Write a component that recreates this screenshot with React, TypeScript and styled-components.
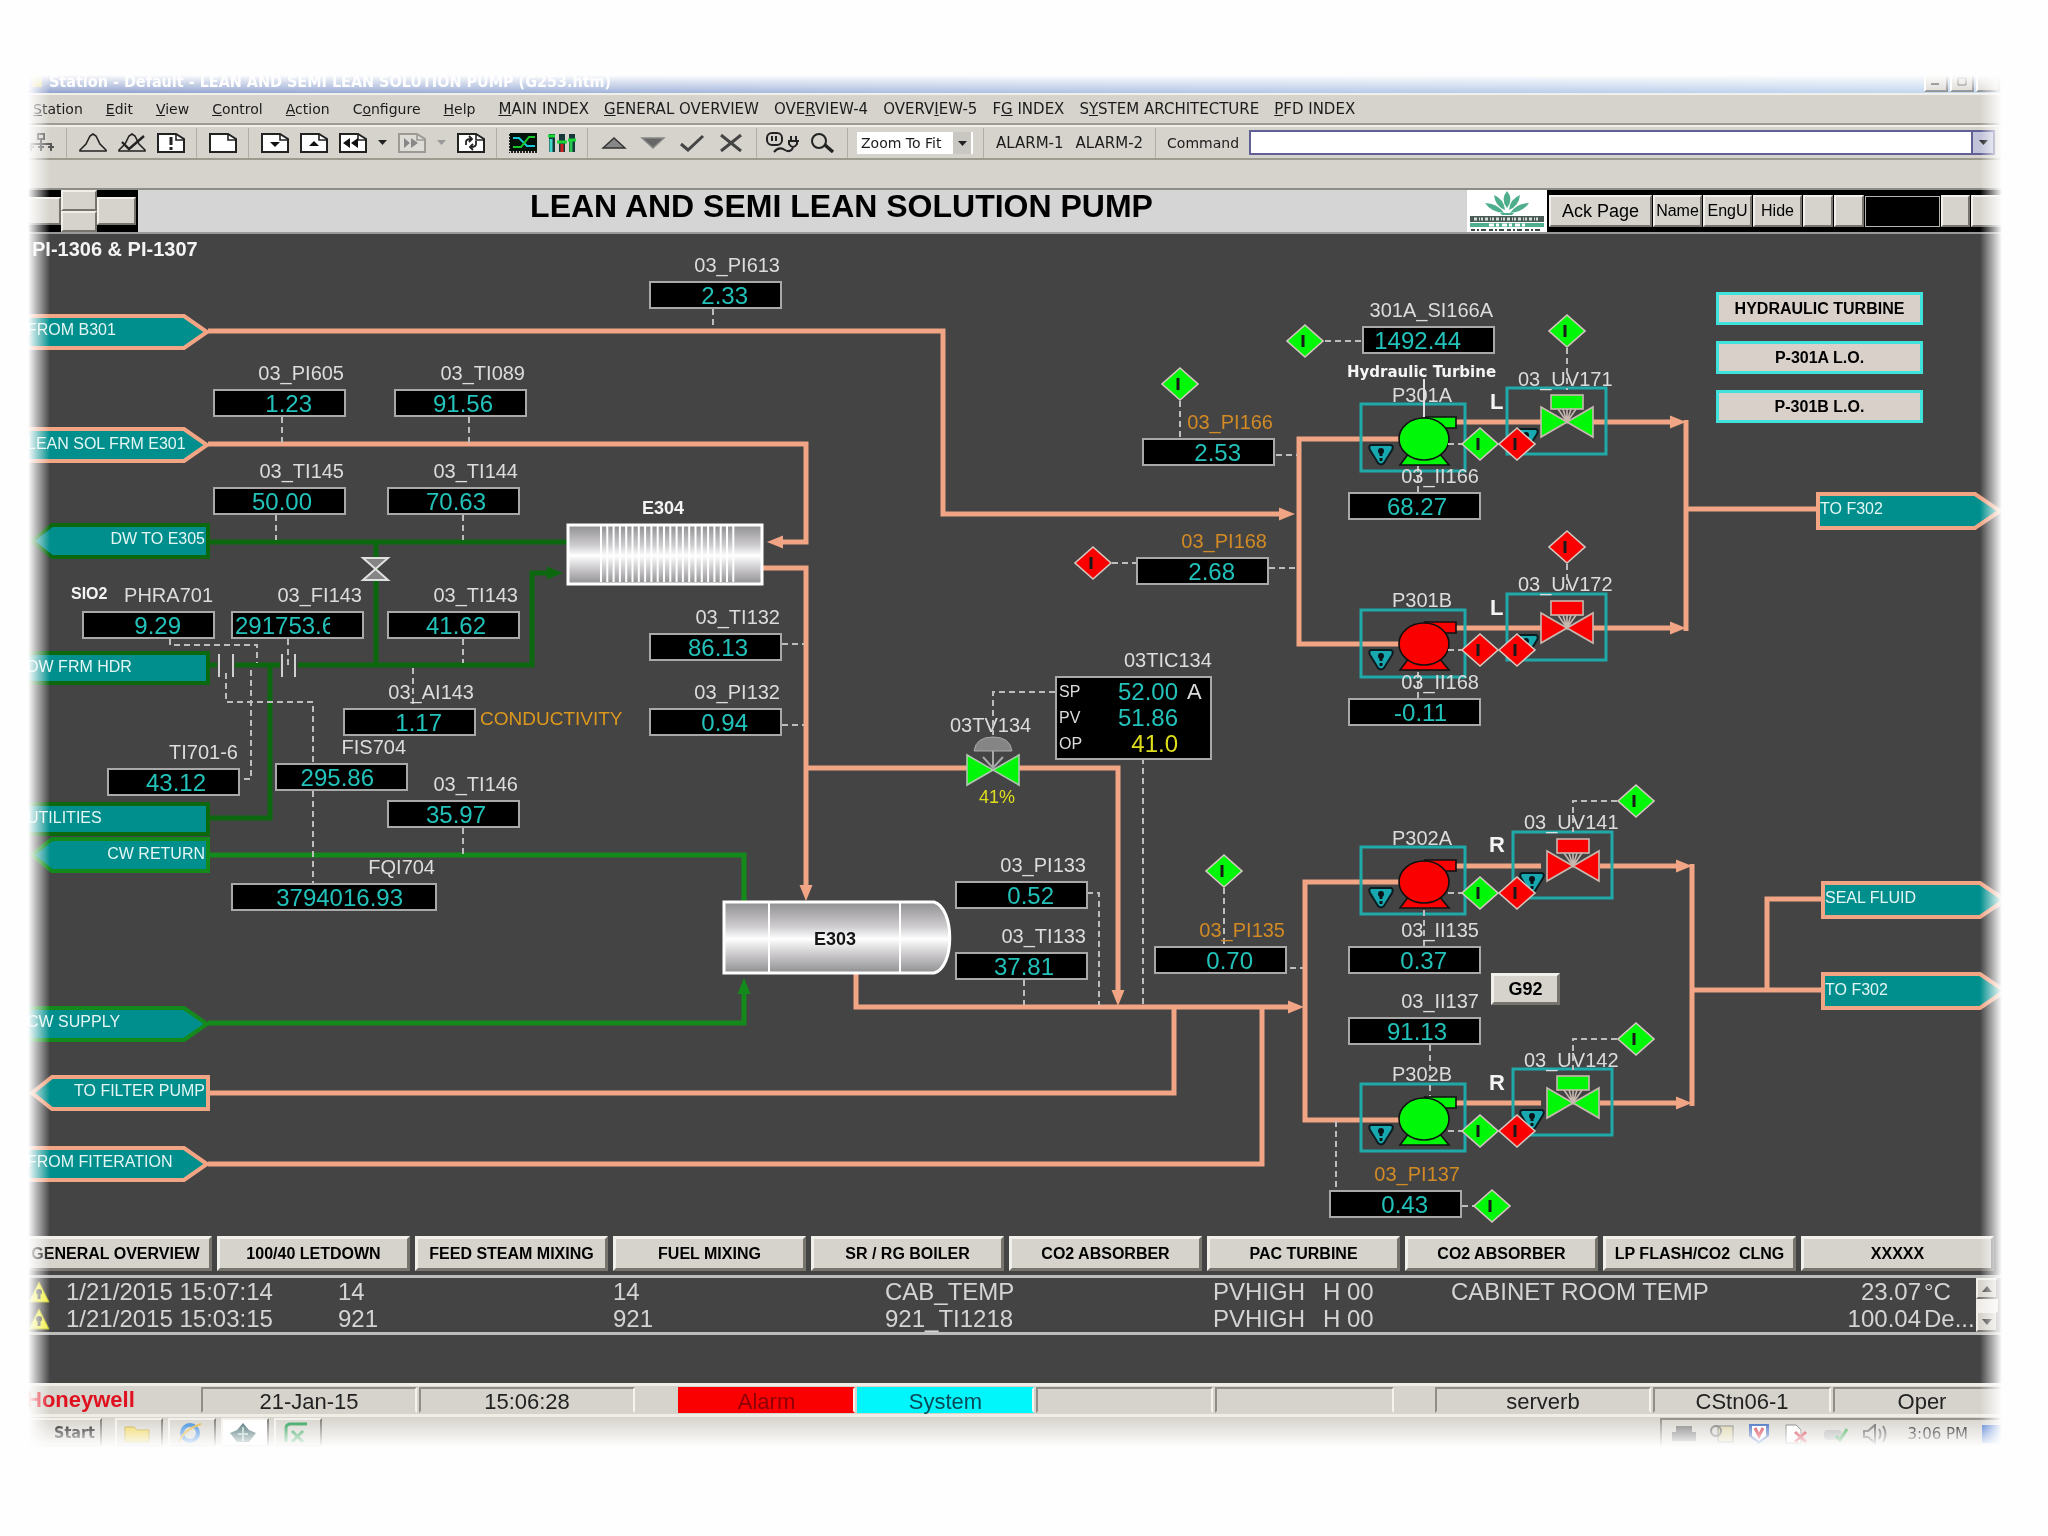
import React from 'react';
import styled, { createGlobalStyle, css } from 'styled-components';

const PEACH = '#f2a584';
const DARK_GREEN = '#0b680f';
const GREEN = '#138a1b';
const TEAL = '#008f8d';
const ON = '#00f808';
const OFF = '#fb0000';
const PANEL = '#d6d3cc';
const SANS = '"Liberation Sans", Arial, sans-serif';
const UI = '"DejaVu Sans", Verdana, sans-serif';

/* Vertical origin of the process drawing's coordinate space. */
const ORIGIN_Y = 234;

const Global = createGlobalStyle`
  * { box-sizing: border-box; }
  body { margin: 0; background: #fefefe; font-family: ${SANS}; }
  button, select, input { font-family: inherit; margin: 0; }
`;

const Page = styled.div`
  padding-top: 70px;
  overflow: hidden;
`;

const Frame = styled.div`
  background: #454445;
  mask-image:
    linear-gradient(to right, transparent 28px, #000 50px, #000 calc(100% - 68px), transparent calc(100% - 46px)),
    linear-gradient(to bottom, transparent 5px, #000 26px, #000 calc(100% - 30px), transparent 100%);
  mask-composite: intersect;
`;

const TitleBar = styled.header`
  display: flex;
  justify-content: space-between;
  align-items: center;
  height: 23px;
  padding: 0 48px 0 32px;
  background: linear-gradient(to right, #7b8fc4, #9fb4dc 45%, #bcd3ee);
  color: #fff;
  font: bold 16px/23px ${UI};
  white-space: nowrap;
`;

const TitleText = styled.span`
  display: flex;
  align-items: center;
  gap: 5px;
  font-family: "DejaVu Sans Condensed", ${UI};
`;

const WindowButtons = styled.div`
  display: flex;
  gap: 2px;
`;

const WindowButton = styled.button`
  width: 24px;
  height: 20px;
  padding: 0;
  border: 2px solid;
  border-color: #fff #777 #777 #fff;
  background: ${PANEL};
`;

const MenuBar = styled.nav`
  display: flex;
  align-items: center;
  height: 32px;
  padding-left: 33px;
  border-top: 2px solid #efeee8;
  border-bottom: 2px solid #9b9b90;
  background: ${PANEL};
`;

const MenuItem = styled.button<{ $page?: boolean }>`
  padding: 0;
  margin-right: ${p => (p.$page ? 15 : 23)}px;
  border: 0;
  background: none;
  color: #1c1c1c;
  font: ${p => (p.$page ? 15 : 14)}px/20px ${UI};
  white-space: nowrap;
`;

const Toolbar = styled.div`
  display: flex;
  align-items: center;
  height: 35px;
  padding: 0 53px 0 21px;
  border-top: 2px solid #efeee8;
  border-bottom: 2px solid #9b9b90;
  background: ${PANEL};
  color: #1c1c1c;
  font: 14px/20px ${UI};
`;

const ToolButton = styled.button<{ $narrow?: boolean }>`
  display: flex;
  justify-content: center;
  align-items: center;
  flex: none;
  width: ${p => (p.$narrow ? 20 : 39)}px;
  height: 26px;
  padding: 0;
  border: 0;
  background: none;
`;

const TextButton = styled.button`
  padding: 0 6px;
  border: 0;
  background: none;
  color: #1c1c1c;
  font: 15px/20px ${UI};
  white-space: nowrap;
`;

const Rule = styled.span`
  flex: none;
  width: 1px;
  height: 30px;
  margin: 0 6px;
  background: #b0aea6;
`;

const ZoomBox = styled.div`
  position: relative;
  flex: none;
  width: 116px;
  margin: 0 4px 0 3px;
`;

const ZoomSelect = styled.select`
  appearance: none;
  width: 100%;
  height: 22px;
  padding: 0 0 0 4px;
  border: 0;
  border-radius: 0;
  background: linear-gradient(to right, #fff 96px, #c9c7c1 96px, #c9c7c1 114px, #fff 114px);
  color: #1c1c1c;
  font: 14px/22px ${UI};
`;

const ZoomCaret = styled.svg`
  position: absolute;
  right: 6px;
  top: 9px;
  pointer-events: none;
`;

const CommandLabel = styled.label`
  padding: 0 10px 0 5px;
`;

const CommandBox = styled.div`
  display: flex;
  flex: 1;
  height: 25px;
  border: 2px solid #605f96;
  background: #fff;
`;

const CommandInput = styled.input`
  flex: 1;
  min-width: 0;
  border: 0;
  padding: 0 4px;
  outline: 0;
  font: 14px/20px ${UI};
`;

const CommandDrop = styled.button`
  display: flex;
  justify-content: center;
  align-items: center;
  width: 22px;
  padding: 0;
  border: 0;
  border-left: 2px solid #605f96;
  background: #c0c3da;
`;

const Spacer = styled.div`
  height: 30px;
  border-bottom: 2px solid #8d8c86;
  background: ${PANEL};
`;

const DisplayHeader = styled.div`
  display: flex;
  height: 44px;
  border-bottom: 2px solid #9a9a98;
  background: #d5d5d6;
`;

const Pager = styled.div`
  display: flex;
  align-items: center;
  width: 138px;
  padding-left: 22px;
  background: #000;
`;

const bevel = css`
  border: 2px solid;
  border-color: #f1efe9 #77746e #77746e #f1efe9;
  background: ${PANEL};
  color: #000;
`;

const PagerButton = styled.button`
  ${bevel}
  width: 39px;
  height: 28px;
  padding: 0;
`;

const PagerStack = styled.div`
  display: flex;
  flex-direction: column;
  width: 36px;
  height: 100%;

  & > button {
    ${bevel}
    flex: 1;
    padding: 0;
  }
`;

const DisplayTitle = styled.h1`
  flex: 1;
  margin: 0;
  padding-left: 78px;
  text-align: center;
  font: bold 32px/32px ${SANS};
  color: #000;
  white-space: nowrap;
`;

const HeaderTools = styled.div`
  display: flex;
  align-items: center;
  gap: 1px;
  width: 501px;
  padding-left: 2px;
  background: #000;
`;

const HeaderButton = styled.button<{ $w: number; $large?: boolean }>`
  ${bevel}
  flex: none;
  width: ${p => p.$w}px;
  height: 32px;
  padding: 0;
  font: ${p => (p.$large ? 18 : 16)}px/26px ${SANS};
`;

const HeaderField = styled.div`
  flex: none;
  width: 75px;
  height: 31px;
  border: 1px solid #b5b5b0;
`;

const Canvas = styled.main`
  position: relative;
  height: 1000px;
  overflow: hidden;
`;

const Drawing = styled.svg`
  display: block;
  width: 2048px;
  height: 1000px;
`;

const Overlay = styled(Drawing)`
  position: absolute;
  inset: 0;
  pointer-events: none;
`;

const at = css<{ $x: number; $y: number }>`
  position: absolute;
  left: ${p => p.$x}px;
  top: ${p => p.$y - ORIGIN_Y}px;
`;

/* A point's tag above its live value; $y is the top of the value box. */
const Point = styled.div<{ $x: number; $y: number; $w: number }>`
  ${at}
  margin-top: -28px;
  display: flex;
  flex-direction: column;
  align-items: flex-end;
  gap: 4px;
  width: ${p => p.$w}px;
`;

const PointTag = styled.span<{ $warn?: boolean }>`
  padding-right: 2px;
  color: ${p => (p.$warn ? '#d18a24' : '#dcdcdc')};
  font: 20px/24px ${SANS};
  white-space: nowrap;
`;

const PointValue = styled.output<{ $clip?: boolean }>`
  display: block;
  width: 100%;
  height: 28px;
  padding: 0 32px 0 2px;
  border: 2px solid #a9a9a9;
  background: #000;
  color: #22c2ba;
  font: 24px/25px ${SANS};
  text-align: ${p => (p.$clip ? 'left' : 'right')};
`;

const ClippedValue = styled.span`
  display: block;
  overflow-x: clip;
`;

const Caption = styled.span<{ $x: number; $y: number; $size?: number; $bold?: boolean; $color?: string }>`
  ${at}
  margin-top: -12px;
  color: ${p => p.$color ?? '#dcdcdc'};
  font: ${p => (p.$bold ? 'bold' : 'normal')} ${p => p.$size ?? 20}px/24px ${SANS};
  white-space: nowrap;
`;

const TurbineCaption = styled(Caption)`
  font: bold 15px/24px ${UI};
`;

const FlowLink = styled.a<{ $x: number; $y: number; $w: number; $end?: boolean }>`
  ${at}
  margin-top: -14px;
  width: ${p => p.$w}px;
  text-align: ${p => (p.$end ? 'right' : 'left')};
  color: #e4f6f4;
  font: 16px/28px ${SANS};
  text-decoration: none;
  white-space: nowrap;
`;

const Faceplate = styled.section`
  ${at}
  display: grid;
  grid-template-columns: 32px 87px 1fr;
  grid-auto-rows: 26px;
  align-items: center;
  width: 157px;
  padding: 1px 0 1px 2px;
  border: 2px solid #a9a9a9;
  background: #000;
  color: #dcdcdc;
  font: 16px/26px ${SANS};
`;

const FaceValue = styled.output<{ $out?: boolean }>`
  color: ${p => (p.$out ? '#dede1c' : '#22c2ba')};
  font-size: 24px;
  text-align: right;
`;

const Mode = styled.span`
  padding-left: 9px;
  font-size: 22px;
`;

const LinkStack = styled.div`
  ${at}
  display: flex;
  flex-direction: column;
  gap: 16px;
  width: 207px;
`;

const StackButton = styled.button`
  height: 33px;
  padding: 0;
  border: 3px solid #3fe3dc;
  background: #d9d0ca;
  color: #000;
  font: bold 16px/24px ${SANS};
`;

const GroupButton = styled.button`
  ${bevel}
  ${at}
  width: 69px;
  height: 32px;
  padding: 0;
  border-width: 3px;
  font: bold 18px/24px ${SANS};
`;

const PageNav = styled.nav`
  display: grid;
  grid-template-columns: repeat(10, 1fr);
  gap: 5px;
  padding: 2px 54px 4px 19px;
`;

const NavButton = styled.button`
  ${bevel}
  height: 35px;
  padding: 0;
  border-width: 3px;
  font: bold 16px/24px ${SANS};
  white-space: pre;
`;

const AlarmPanel = styled.section`
  display: flex;
  padding-right: 50px;
  border-top: 3px solid #bdbdbb;
  border-bottom: 3px solid #bdbdbb;
`;

const AlarmTable = styled.table`
  flex: 1;
  table-layout: fixed;
  width: 100%;
  border-collapse: collapse;
  color: #d4d4d4;
  font: 24px/27px ${SANS};
  white-space: nowrap;

  td { padding: 0; height: 27px; }
  td:first-child { padding-left: 28px; }
  td:first-child svg { display: block; }
`;

const NumberCell = styled.td`
  text-align: right;
`;

const UnitCell = styled.td`
  text-indent: 3px;
`;

const ScrollBar = styled.div`
  display: flex;
  flex-direction: column;
  justify-content: space-between;
  width: 22px;
  background: #efece8;

  & > button {
    ${bevel}
    display: flex;
    justify-content: center;
    align-items: center;
    height: 21px;
    padding: 0;
  }
`;

const Gap = styled.div`
  height: 48px;
`;

const StatusBar = styled.footer`
  display: flex;
  align-items: center;
  height: 34px;
  padding-left: 26px;
  border-top: 3px solid #efede6;
  border-bottom: 3px solid #efede6;
  background: ${PANEL};
  font: 22px/24px ${SANS};
  color: #222;
`;

const Brand = styled.strong`
  width: 175px;
  color: #df1220;
`;

const StatusCell = styled.div<{ $w: number; $gap?: number; $fill?: string; $ink?: string }>`
  flex: none;
  width: ${p => p.$w}px;
  height: 26px;
  margin-right: ${p => p.$gap ?? 2}px;
  border: 2px solid;
  border-color: ${p => p.$fill ?? '#8f8d86'} #f5f3ee ${p => p.$fill ?? '#d6d3cc'} ${p => p.$fill ?? '#8f8d86'};
  background: ${p => p.$fill ?? 'none'};
  color: ${p => p.$ink ?? '#222'};
  line-height: 25px;
  text-align: center;
`;

const TaskBar = styled.div`
  display: flex;
  justify-content: space-between;
  height: 30px;
  padding: 1px 44px 0 24px;
  background: ${PANEL};
`;

const TaskGroup = styled.div`
  display: flex;
  align-items: center;
  gap: 5px;
`;

const TaskButton = styled.button<{ $wide?: boolean; $active?: boolean }>`
  ${bevel}
  display: flex;
  align-items: center;
  justify-content: ${p => (p.$wide ? 'flex-end' : 'center')};
  width: ${p => (p.$wide ? 78 : 48)}px;
  height: 29px;
  padding: 0 5px 0 0;
  margin-right: ${p => (p.$wide ? 8 : 0)}px;
  background: ${p => (p.$active ? '#fff' : PANEL)};
  font: bold 16px/24px "DejaVu Sans Condensed", ${UI};
`;

const Tray = styled.div`
  display: flex;
  align-items: center;
  gap: 14px;
  padding-left: 10px;
  border-top: 2px solid #8f8d86;
  border-left: 2px solid #8f8d86;
  font: 15px/24px ${UI};
`;

const MENU: [string, number, boolean?][] = [
  ['Station', 0], ['Edit', 0], ['View', 0], ['Control', 0], ['Action', 0], ['Configure', 1], ['Help', 0],
  ['MAIN INDEX', 0, true], ['GENERAL OVERVIEW', 0, true], ['OVERVIEW-4', 3, true], ['OVERVIEW-5', 5, true],
  ['FG INDEX', 1, true], ['SYSTEM ARCHITECTURE', 1, true], ['PFD INDEX', 0, true],
];

type PointDef = { tag: string; value: string; x: number; y: number; w?: number; warn?: boolean; clip?: boolean };
const POINTS: PointDef[] = [
  { tag: '03_PI613', value: '2.33', x: 649, y: 281 },
  { tag: '03_PI605', value: '1.23', x: 213, y: 389 },
  { tag: '03_TI089', value: '91.56', x: 394, y: 389 },
  { tag: '03_TI145', value: '50.00', x: 213, y: 487 },
  { tag: '03_TI144', value: '70.63', x: 387, y: 487 },
  { tag: 'PHRA701', value: '9.29', x: 82, y: 611 },
  { tag: '03_FI143', value: '291753.6', x: 231, y: 611, clip: true },
  { tag: '03_TI143', value: '41.62', x: 387, y: 611 },
  { tag: '03_AI143', value: '1.17', x: 343, y: 708 },
  { tag: '03_TI132', value: '86.13', x: 649, y: 633 },
  { tag: '03_PI132', value: '0.94', x: 649, y: 708 },
  { tag: 'TI701-6', value: '43.12', x: 107, y: 768 },
  { tag: 'FIS704', value: '295.86', x: 275, y: 763 },
  { tag: '03_TI146', value: '35.97', x: 387, y: 800 },
  { tag: 'FQI704', value: '3794016.93', x: 231, y: 883, w: 206 },
  { tag: '03_PI133', value: '0.52', x: 955, y: 881 },
  { tag: '03_TI133', value: '37.81', x: 955, y: 952 },
  { tag: '03_PI135', value: '0.70', x: 1154, y: 946, warn: true },
  { tag: '03_PI166', value: '2.53', x: 1142, y: 438, warn: true },
  { tag: '03_PI168', value: '2.68', x: 1136, y: 557, warn: true },
  { tag: '301A_SI166A', value: '1492.44', x: 1362, y: 326 },
  { tag: '03_II166', value: '68.27', x: 1348, y: 492 },
  { tag: '03_II168', value: '-0.11', x: 1348, y: 698 },
  { tag: '03_II135', value: '0.37', x: 1348, y: 946 },
  { tag: '03_II137', value: '91.13', x: 1348, y: 1017 },
  { tag: '03_PI137', value: '0.43', x: 1329, y: 1190, warn: true },
];

type Flow = { text: string; y: number; ty: number; shape: 'right' | 'left' | 'rect'; color: string };
const LEFT_FLOWS: Flow[] = [
  { text: 'FROM B301', y: 332, ty: 330, shape: 'right', color: PEACH },
  { text: 'LEAN SOL FRM E301', y: 445, ty: 444, shape: 'right', color: PEACH },
  { text: 'DW TO E305', y: 541, ty: 539, shape: 'left', color: DARK_GREEN },
  { text: 'DW FRM HDR', y: 668, ty: 667, shape: 'rect', color: DARK_GREEN },
  { text: 'UTILITIES', y: 819, ty: 818, shape: 'rect', color: DARK_GREEN },
  { text: 'CW RETURN', y: 855, ty: 854, shape: 'left', color: GREEN },
  { text: 'CW SUPPLY', y: 1024, ty: 1022, shape: 'right', color: GREEN },
  { text: 'TO FILTER PUMP', y: 1093, ty: 1091, shape: 'left', color: PEACH },
  { text: 'FROM FITERATION', y: 1164, ty: 1162, shape: 'right', color: PEACH },
];
const RIGHT_FLOWS = [
  { text: 'TO F302', x: 1818, y: 511, ty: 509 },
  { text: 'SEAL FLUID', x: 1823, y: 900, ty: 898 },
  { text: 'TO F302', x: 1823, y: 991, ty: 990 },
];

const PIPES: [string, string][] = [
  [PEACH, 'M208 331H943V514H1280'],
  [PEACH, 'M208 444H806V542H783'],
  [PEACH, 'M763 568H806V886'],
  [PEACH, 'M806 768H968M1019 768H1118V994'],
  [PEACH, 'M856 973V1007H1291'],
  [PEACH, 'M208 1093H1174V1007M208 1164H1262V1007'],
  [PEACH, 'M1400 439H1299V644H1400M1400 882H1305V1120H1400'],
  [PEACH, 'M1455 422H1541M1593 422H1672M1455 628H1541M1593 628H1672M1686 420V631M1686 509H1817'],
  [PEACH, 'M1455 866H1541M1600 866H1678M1455 1103H1541M1600 1103H1678M1692 864V1106M1692 990H1822M1767 990V899H1822'],
  [DARK_GREEN, 'M208 542H567M376 542V665M208 665H217M235 665H280M298 665H532V573H548M270 665V818H208'],
  [GREEN, 'M208 855H744V902M208 1023H744V992'],
];

/* Arrow heads: tip position, direction, colour. */
const HEADS: [number, number, 'r' | 'l' | 'u' | 'd', string][] = [
  [1295, 514, 'r', PEACH], [767, 542, 'l', PEACH], [806, 901, 'd', PEACH], [1118, 1006, 'd', PEACH],
  [1304, 1007, 'r', PEACH], [1686, 422, 'r', PEACH], [1686, 628, 'r', PEACH], [1692, 866, 'r', PEACH],
  [1692, 1103, 'r', PEACH], [563, 573, 'r', DARK_GREEN], [744, 978, 'u', GREEN],
];

const SIGNALS = [
  'M713 309V329M282 417V443M469 417V443M276 515V540M463 515V540',
  'M170 639V645H257V663M288 639V665M463 639V663M413 668V708',
  'M251 670V779H240M226 673V702H313V763M313 791V883M463 828V854',
  'M782 644H804M782 725H804M1055 692H993V735M1143 758V1005M1087 893H1099V1005M1024 980V1005',
  'M1224 888V946M1290 968H1303M1180 401V438M1276 455H1297M1269 568H1297M1112 563H1136M1325 341H1362',
  'M1567 348V390M1567 564V594M1617 801H1573V832M1617 1039H1573V1070M1462 1206H1474M1336 1121V1190',
  'M1418 466V492M1418 672V698M1424 910V946M1430 1045V1096M1448 444H1462M1448 650H1462M1448 893H1462M1448 1131H1462',
];

const DIAMONDS: [number, number, string][] = [
  [1180, 384, ON], [1093, 563, OFF], [1305, 341, ON], [1567, 331, ON], [1567, 547, OFF],
  [1636, 801, ON], [1636, 1039, ON], [1224, 871, ON], [1492, 1206, ON],
  [1480, 444, ON], [1517, 444, OFF], [1480, 650, OFF], [1517, 650, OFF],
  [1480, 893, ON], [1517, 893, OFF], [1480, 1131, ON], [1517, 1131, OFF],
];

const PUMPS: [number, string][] = [[439, ON], [644, OFF], [882, OFF], [1119, ON]];
const VALVES: [number, number, string][] = [[1567, 422, ON], [1567, 628, OFF], [1573, 866, OFF], [1573, 1103, ON]];

const ALARMS = [
  ['1/21/2015 15:07:14', '14', '14', 'CAB_TEMP', 'PVHIGH', 'H 00', 'CABINET ROOM TEMP', '23.07', '°C'],
  ['1/21/2015 15:03:15', '921', '921', '921_TI1218', 'PVHIGH', 'H 00', '', '100.04', 'De...'],
];

const PAGES = ['GENERAL OVERVIEW', '100/40 LETDOWN', 'FEED STEAM MIXING', 'FUEL MIXING', 'SR / RG BOILER',
  'CO2 ABSORBER', 'PAC TURBINE', 'CO2 ABSORBER', 'LP FLASH/CO2  CLNG', 'XXXXX'];

const sheet = (extra?: React.ReactNode, ink = '#222', fill = '#fff') => (
  <svg width="28" height="20" viewBox="0 0 28 20" fill="none" stroke={ink} strokeWidth="2">
    <path d="M1 1H19L27 6V19H1Z" fill={fill} />
    <path d="M19 1V7H27" strokeWidth="1.6" />
    {extra}
  </svg>
);

const bellShape = <path d="M14 1L11 3L7 11L1 17V18H27V17L21 11L17 3Z" />;

const ICONS: Record<string, React.ReactNode> = {
  tree: (
    <svg width="28" height="20" viewBox="0 0 28 20" fill="none" stroke="#555" strokeWidth="2">
      <path d="M11 1H17V6H11ZM14 6V11M4 18V11H24V18M14 11V18M1 14H7M11 14H17M21 14H27" />
    </svg>
  ),
  bell: (
    <svg width="28" height="20" viewBox="0 0 28 20" fill="none" stroke="#222" strokeWidth="1.6">
      {bellShape}
    </svg>
  ),
  bellOff: (
    <svg width="28" height="20" viewBox="0 0 28 20" fill="none" stroke="#222" strokeWidth="1.6">
      {bellShape}
      <path d="M4 9L11 16L26 3" strokeWidth="2.4" />
    </svg>
  ),
  notice: sheet(<path d="M14 4V12M14 14V17" strokeWidth="3" />),
  sheet: sheet(),
  down: sheet(<path d="M9 9H19L14 14Z" fill="#111" stroke="none" />),
  up: sheet(<path d="M9 13H19L14 8Z" fill="#111" stroke="none" />),
  back: sheet(<path d="M11 5V15L4 10ZM19 5V15L12 10Z" fill="#111" stroke="none" />),
  fwd: sheet(<path d="M6 5V15L12 10ZM13 5V15L20 10Z" fill="#888" stroke="none" />, '#9c9a94', '#dedcd6'),
  reload: sheet(<path d="M9 12V9Q9 6 14 6M12 3L15 6L12 9M19 8V11Q19 14 14 14M16 11L13 14L16 17" strokeWidth="1.8" />),
  caret: <svg width="9" height="6"><path d="M0 0H9L4.500 5Z" fill="#222" /></svg>,
  caretOff: <svg width="9" height="6"><path d="M0 0H9L4.500 5Z" fill="#999" /></svg>,
  trend: (
    <svg width="28" height="20" viewBox="0 0 28 20" fill="none">
      <rect x="1" width="27" height="18" fill="#05120a" />
      <path d="M4 5H10L18 13H26" stroke="#18c8d8" strokeWidth="2" />
      <path d="M4 14H12L20 4H26" stroke="#18c828" strokeWidth="2" />
      <path d="M0 1V20M2 19H28" stroke="#222" strokeWidth="2" strokeDasharray="2 1" />
    </svg>
  ),
  bars: (
    <svg width="28" height="20" viewBox="0 0 28 20">
      <path d="M4 1V19M14 1V19M24 1V19" stroke="#173838" strokeWidth="6" />
      <path d="M3 6V19" stroke="#3fd8c8" strokeWidth="3" />
      <path d="M14 11V19" stroke="#d02020" strokeWidth="3" />
      <path d="M23 8V19" stroke="#28c850" strokeWidth="3" />
      <path d="M0 3H7M9 9H19M20 7H28" stroke="#18d838" strokeWidth="3" />
    </svg>
  ),
  raise: <svg width="26" height="14"><path d="M2 12L13 2L24 12Z" fill="#888" stroke="#333" strokeWidth="1.4" /></svg>,
  lower: <svg width="26" height="14"><path d="M2 2L13 12L24 2Z" fill="#666" stroke="#888" strokeWidth="1.4" /></svg>,
  tick: <svg width="26" height="18" fill="none" stroke="#444" strokeWidth="3"><path d="M2 10L9 16L24 2" /></svg>,
  cross: <svg width="24" height="18" fill="none" stroke="#444" strokeWidth="3"><path d="M2 1L22 17M22 1L2 17" /></svg>,
  plug: (
    <svg width="34" height="22" viewBox="0 0 34 22" fill="none" stroke="#222" strokeWidth="2">
      <rect x="1" y="1" width="15" height="12" rx="5" />
      <path d="M6 4V9M10 4V9M22 9H33M23 9V12Q27 18 31 12V9M25 4V9M30 4V9M27 16Q24 21 19 18Q13 14 8 20" />
    </svg>
  ),
  lens: (
    <svg width="26" height="20" viewBox="0 0 26 20" fill="none" stroke="#222" strokeWidth="2">
      <circle cx="10" cy="8" r="7" />
      <path d="M16 12L24 19" strokeWidth="3.4" />
    </svg>
  ),
};

const Tool = ({ icon, label, narrow }: { icon: string; label: string; narrow?: boolean }) => (
  <ToolButton $narrow={narrow} aria-label={label}>{ICONS[icon]}</ToolButton>
);

const Diamond = ({ x, y, fill }: { x: number; y: number; fill: string }) => (
  <g transform={`translate(${x} ${y})`}>
    <path d="M0 -16L18 0L0 16L-18 0Z" fill={fill} stroke="#d6c8c0" strokeWidth="1.600" />
    <path d="M-2 -6V6" stroke="#1a1a1a" strokeWidth="3" />
  </g>
);

const Caution = ({ x, y }: { x: number; y: number }) => (
  <g transform={`translate(${x} ${y})`}>
    <path d="M-10 0H10Q13 1 11 5L3 18Q0 21 -3 18L-11 5Q-13 1 -10 0Z" fill="#18a8b0" stroke="#0a1c20" strokeWidth="2" />
    <circle cy="6" r="3" fill="#0a1418" />
    <path d="M0 6V11M0 13V16" stroke="#0a1418" strokeWidth="3" />
  </g>
);

const Pump = ({ y, fill }: { y: number; fill: string }) => (
  <g transform={`translate(1424 ${y})`} fill={fill} stroke="#101010" strokeWidth="1.600">
    <path d="M-15 14L-24 26H25L15 14Z" />
    <path d="M0 -22H32V-11H20Z" />
    <ellipse rx="25" ry="21" />
  </g>
);

const Valve = ({ x, y, fill }: { x: number; y: number; fill: string }) => (
  <g transform={`translate(${x} ${y})`} stroke="#c8b8b0" strokeWidth="1.600">
    <path d="M-9 -13L0 0L9 -13M-4 -13L0 0L4 -13M0 -13V0" fill="none" />
    <rect x="-16" y="-27" width="32" height="14" fill={fill} />
    <path d="M-26 -15L26 15V-15L-26 15Z" fill={fill} />
  </g>
);

const Head = ({ x, y, dir, fill }: { x: number; y: number; dir: string; fill: string }) => {
  const turn: Record<string, number> = { r: 0, d: 90, l: 180, u: 270 };
  return <path d="M0 0L-16 -6.500V6.500Z" fill={fill} transform={`translate(${x} ${y}) rotate(${turn[dir]})`} />;
};

const flowPath = (shape: Flow['shape'], y: number) =>
  shape === 'right' ? `M10 ${y - 16}H184L207 ${y}L184 ${y + 16}H10Z`
    : shape === 'left' ? `M208 ${y - 16}H52L32 ${y}L52 ${y + 16}H208Z`
      : `M10 ${y - 15}H208V${y + 15}H10Z`;

const stripes = Array.from({ length: 22 }, (_, i) => `M${601 + i * 6.3} 526V582`).join('');

const ProcessDrawing = () => (
  <Drawing viewBox={`0 ${ORIGIN_Y} 2048 1000`} aria-hidden="true">
    <defs>
      <linearGradient id="steel" x2="0" y2="1">
        <stop offset="0" stopColor="#8f8e90" />
        <stop offset="0.350" stopColor="#cfcdd0" />
        <stop offset="0.520" stopColor="#fff" />
        <stop offset="0.700" stopColor="#d4d2d4" />
        <stop offset="1" stopColor="#8f8e90" />
      </linearGradient>
    </defs>
    {PIPES.map(([color, d]) => <path key={d} d={d} fill="none" stroke={color} strokeWidth="5" />)}
    {HEADS.map(([x, y, dir, fill]) => <Head key={`${x}-${y}`} x={x} y={y} dir={dir} fill={fill} />)}
    {LEFT_FLOWS.map(f => <path key={f.text} d={flowPath(f.shape, f.y)} fill={TEAL} stroke={f.color} strokeWidth="4" />)}
    {RIGHT_FLOWS.map(f => (
      <path key={f.y} d={`M${f.x} ${f.y - 17}H${f.x + 157}L${f.x + 182} ${f.y}L${f.x + 157} ${f.y + 17}H${f.x}Z`}
        fill={TEAL} stroke={PEACH} strokeWidth="4" />
    ))}
    <path d="M219 654V677M233 654V677M282 654V677M295 654V677" stroke="#d0d0d0" strokeWidth="2" />
    <path d="M363 558H388L363 580H388Z" fill="#858585" stroke="#e0e0e0" strokeWidth="2" />

    <rect x="568" y="525" width="194" height="59" fill="url(#steel)" stroke="#fff" strokeWidth="3" />
    <path d={stripes} stroke="#fff" strokeWidth="2" />
    <path d="M724 902H934C955 908 955 968 934 973H724Z" fill="url(#steel)" stroke="#fff" strokeWidth="3" />
    <path d="M769 902V973M900 902V973" stroke="#fff" strokeWidth="2" />

    {[404, 610, 847, 1084].map(y => (
      <rect key={y} x="1361" y={y} width="104" height="67" fill="none" stroke="#1fa9a9" strokeWidth="3" />
    ))}
    {VALVES.map(([x, y]) => (
      <rect key={`${x}-${y}`} x={x - 60} y={y - 34} width="99" height="66" fill="none" stroke="#1fa9a9" strokeWidth="3" />
    ))}
    {PUMPS.map(([y, fill]) => <Pump key={y} y={y} fill={fill} />)}
    {PUMPS.map(([y]) => <Caution key={y} x={1381} y={y + 6} />)}
    {VALVES.map(([x, y, fill]) => <Valve key={`${x}-${y}`} x={x} y={y} fill={fill} />)}
    {VALVES.map(([x, y]) => <Caution key={`${x}-${y}`} x={x - 41} y={y + 7} />)}

    <path d="M974 751Q976 737 993 737Q1010 737 1012 751Z" fill="#858585" stroke="#a8a8a8" />
    <path d="M967 755L1019 785V755L967 785Z" fill={ON} stroke="#b0c8b0" strokeWidth="1.600" />
    <path d="M993 751V768M983 757L993 768L1003 757" fill="none" stroke="#a8a8a8" strokeWidth="2" />
  </Drawing>
);

const SignalOverlay = () => (
  <Overlay viewBox={`0 ${ORIGIN_Y} 2048 1000`} aria-hidden="true">
    {SIGNALS.map(d => (
      <path key={d} d={d} fill="none" stroke="#bdbdbd" strokeWidth="2" strokeDasharray="6 4" />
    ))}
    <path d="M1424 379V417" stroke="#e0e0e0" strokeWidth="2" />
    {DIAMONDS.map(([x, y, fill]) => <Diamond key={`${x}-${y}`} x={x} y={y} fill={fill} />)}
  </Overlay>
);

const Logo = () => (
  <svg width="80" height="42" viewBox="0 0 80 42" aria-label="Company logo">
    <rect width="80" height="42" fill="#fff" />
    <g fill="#4fae8c">
      <path d="M40 1Q47 9 40 18Q33 9 40 1Z" />
      <path d="M27 5Q37 9 38 20Q28 16 27 5ZM53 5Q43 9 42 20Q52 16 53 5Z" />
      <path d="M18 13Q30 13 37 23Q24 22 18 13ZM62 13Q50 13 43 23Q56 22 62 13Z" />
      <path d="M33 23H47L45 25H35Z" />
      <rect x="3" y="33" width="74" height="4" />
    </g>
    <rect x="3" y="26" width="74" height="6" fill="#4a5a56" />
    <path d="M7 29H73" stroke="#d4dcd8" strokeWidth="3" strokeDasharray="3 2 1 1 2 2" />
    <path d="M22 35H58" stroke="#fff" strokeWidth="3" strokeDasharray="5 2 3 3" />
    <path d="M4 40H76" stroke="#3a4a44" strokeWidth="2" strokeDasharray="4 2 2 2 5 3" />
  </svg>
);

const AlarmIcon = () => (
  <svg width="22" height="22" viewBox="0 0 22 22">
    <path d="M11 1L21 21H1Z" fill="#f2f03c" stroke="#b8b428" />
    <circle cx="11" cy="11" r="3" fill="#555" />
    <path d="M11 14V18" stroke="#555" strokeWidth="3" />
  </svg>
);

const Arrow = ({ up }: { up?: boolean }) => (
  <svg width="12" height="8"><path d={up ? 'M1 7H11L6 1Z' : 'M1 1H11L6 7Z'} fill="#444" /></svg>
);

export default function App() {
  return (
    <Page>
      <Global />
      <Frame>
        <TitleBar>
          <TitleText>
            <svg width="12" height="14"><path d="M0 0H10V12H0Z" fill="#d8c860" /></svg>
            Station - Default - LEAN AND SEMI LEAN SOLUTION PUMP (G253.htm)
          </TitleText>
          <WindowButtons>
            <WindowButton aria-label="Minimize"><svg width="12" height="10"><path d="M1 8H9" stroke="#222" strokeWidth="2" /></svg></WindowButton>
            <WindowButton aria-label="Restore"><svg width="12" height="10"><path d="M2 2H10V9H2Z" fill="none" stroke="#222" /></svg></WindowButton>
            <WindowButton aria-label="Close" />
          </WindowButtons>
        </TitleBar>

        <MenuBar>
          {MENU.map(([text, key, page]) => (
            <MenuItem key={text} $page={page}>
              {text.slice(0, key)}<u>{text[key]}</u>{text.slice(key + 1)}
            </MenuItem>
          ))}
        </MenuBar>

        <Toolbar>
          <Tool icon="tree" label="Station tree" />
          <Rule />
          <Tool icon="bell" label="Alarm summary" />
          <Tool icon="bellOff" label="Acknowledge" />
          <Tool icon="notice" label="Messages" />
          <Rule />
          <Tool icon="sheet" label="Call page" />
          <Rule />
          <Tool icon="down" label="Page down" />
          <Tool icon="up" label="Page up" />
          <Tool icon="back" label="Previous page" />
          <Tool icon="caret" label="Previous pages" narrow />
          <Tool icon="fwd" label="Next page" />
          <Tool icon="caretOff" label="Next pages" narrow />
          <Tool icon="reload" label="Reload page" />
          <Rule />
          <Tool icon="trend" label="Trend" />
          <Tool icon="bars" label="Group" />
          <Rule />
          <Tool icon="raise" label="Raise" />
          <Tool icon="lower" label="Lower" />
          <Tool icon="tick" label="Accept" />
          <Tool icon="cross" label="Cancel" />
          <Rule />
          <Tool icon="plug" label="Connect" />
          <Tool icon="lens" label="Search" />
          <Rule />
          <ZoomBox>
            <ZoomSelect aria-label="Zoom" defaultValue="fit">
              <option value="fit">Zoom To Fit</option>
              <option value="100">100%</option>
            </ZoomSelect>
            <ZoomCaret width="9" height="6"><path d="M0 0H9L4.500 5Z" fill="#222" /></ZoomCaret>
          </ZoomBox>
          <Rule />
          <TextButton>ALARM-1</TextButton>
          <TextButton>ALARM-2</TextButton>
          <Rule />
          <CommandLabel htmlFor="command">Command</CommandLabel>
          <CommandBox>
            <CommandInput id="command" />
            <CommandDrop aria-label="Command history">{ICONS.caret}</CommandDrop>
          </CommandBox>
        </Toolbar>
        <Spacer />

        <DisplayHeader>
          <Pager>
            <PagerButton aria-label="Previous display" />
            <PagerStack>
              <button aria-label="Display above" />
              <button aria-label="Display below" />
            </PagerStack>
            <PagerButton aria-label="Next display" />
          </Pager>
          <DisplayTitle>LEAN AND SEMI LEAN SOLUTION PUMP</DisplayTitle>
          <Logo />
          <HeaderTools>
            <HeaderButton $w={103} $large>Ack Page</HeaderButton>
            <HeaderButton $w={49}>Name</HeaderButton>
            <HeaderButton $w={49}>EngU</HeaderButton>
            <HeaderButton $w={49}>Hide</HeaderButton>
            <HeaderButton $w={30} aria-label="Option 1" />
            <HeaderButton $w={30} aria-label="Option 2" />
            <HeaderField />
            <HeaderButton $w={29} aria-label="Option 3" />
            <HeaderButton $w={49} aria-label="Option 4" />
          </HeaderTools>
        </DisplayHeader>

        <Canvas>
          <ProcessDrawing />
          {LEFT_FLOWS.map(f => (
            <FlowLink key={f.text} href="#" $x={27} $y={f.ty} $w={178} $end={f.shape === 'left'}>{f.text}</FlowLink>
          ))}
          {RIGHT_FLOWS.map(f => (
            <FlowLink key={f.y} href="#" $x={f.x + 2} $y={f.ty} $w={150}>{f.text}</FlowLink>
          ))}

          <Caption $x={32} $y={249} $bold $color="#f4f4f4">PI-1306 &amp; PI-1307</Caption>
          <Caption $x={642} $y={508} $size={18} $bold $color="#f4f4f4">E304</Caption>
          <Caption $x={814} $y={939} $size={18} $bold $color="#141414">E303</Caption>
          <Caption $x={71} $y={594} $size={16} $bold $color="#f4f4f4">SIO2</Caption>
          <Caption $x={480} $y={719} $size={19} $color="#dc981c">CONDUCTIVITY</Caption>
          <Caption $x={950} $y={725}>03TV134</Caption>
          <Caption $x={979} $y={797} $size={18} $color="#dede1c">41%</Caption>
          <Caption $x={1124} $y={660}>03TIC134</Caption>
          <TurbineCaption $x={1347} $y={372} $color="#f4f4f4">Hydraulic Turbine</TurbineCaption>
          <Caption $x={1392} $y={395}>P301A</Caption>
          <Caption $x={1392} $y={600}>P301B</Caption>
          <Caption $x={1392} $y={838}>P302A</Caption>
          <Caption $x={1392} $y={1074}>P302B</Caption>
          <Caption $x={1518} $y={379}>03_UV171</Caption>
          <Caption $x={1518} $y={584}>03_UV172</Caption>
          <Caption $x={1524} $y={822}>03_UV141</Caption>
          <Caption $x={1524} $y={1060}>03_UV142</Caption>
          <Caption $x={1490} $y={402} $size={22} $bold $color="#f4f4f4">L</Caption>
          <Caption $x={1490} $y={608} $size={22} $bold $color="#f4f4f4">L</Caption>
          <Caption $x={1489} $y={845} $size={22} $bold $color="#f4f4f4">R</Caption>
          <Caption $x={1489} $y={1083} $size={22} $bold $color="#f4f4f4">R</Caption>

          <SignalOverlay />

          {POINTS.map(p => (
            <Point key={p.tag} $x={p.x} $y={p.y} $w={p.w ?? 133}>
              <PointTag $warn={p.warn}>{p.tag}</PointTag>
              <PointValue $clip={p.clip}>
                {p.clip ? <ClippedValue>{p.value}</ClippedValue> : p.value}
              </PointValue>
            </Point>
          ))}

          <Faceplate $x={1055} $y={676}>
            <span>SP</span><FaceValue>52.00</FaceValue><Mode>A</Mode>
            <span>PV</span><FaceValue>51.86</FaceValue><span />
            <span>OP</span><FaceValue $out>41.0</FaceValue><span />
          </Faceplate>

          <LinkStack $x={1716} $y={292}>
            <StackButton>HYDRAULIC TURBINE</StackButton>
            <StackButton>P-301A L.O.</StackButton>
            <StackButton>P-301B L.O.</StackButton>
          </LinkStack>
          <GroupButton $x={1491} $y={973}>G92</GroupButton>
        </Canvas>

        <PageNav>
          {PAGES.map((p, i) => <NavButton key={i}>{p}</NavButton>)}
        </PageNav>

        <AlarmPanel>
          <AlarmTable>
            <colgroup>
              <col style={{ width: 66 }} />
              <col style={{ width: 272 }} />
              <col style={{ width: 275 }} />
              <col style={{ width: 272 }} />
              <col style={{ width: 328 }} />
              <col style={{ width: 110 }} />
              <col style={{ width: 128 }} />
              <col />
              <col style={{ width: 100 }} />
              <col style={{ width: 55 }} />
            </colgroup>
            <tbody>
              {ALARMS.map(a => (
                <tr key={a[0]}>
                  <td><AlarmIcon /></td>
                  {a.slice(0, 7).map((cell, i) => <td key={i}>{cell}</td>)}
                  <NumberCell>{a[7]}</NumberCell>
                  <UnitCell>{a[8]}</UnitCell>
                </tr>
              ))}
            </tbody>
          </AlarmTable>
          <ScrollBar>
            <button aria-label="Scroll up"><Arrow up /></button>
            <button aria-label="Scroll down"><Arrow /></button>
          </ScrollBar>
        </AlarmPanel>
        <Gap />

        <StatusBar>
          <Brand>Honeywell</Brand>
          <StatusCell $w={216}>21-Jan-15</StatusCell>
          <StatusCell $w={216} $gap={43}>15:06:28</StatusCell>
          <StatusCell $w={177} $fill="#fa0000" $ink="#8c0008">Alarm</StatusCell>
          <StatusCell $w={177} $fill="#00f6fa" $ink="#0a4a58">System</StatusCell>
          <StatusCell $w={177} />
          <StatusCell $w={179} $gap={41} />
          <StatusCell $w={216}>serverb</StatusCell>
          <StatusCell $w={178}>CStn06-1</StatusCell>
          <StatusCell $w={178}>Oper</StatusCell>
        </StatusBar>

        <TaskBar>
          <TaskGroup>
            <TaskButton $wide>Start</TaskButton>
            <TaskButton aria-label="Folders"><svg width="26" height="20"><path d="M1 4H10L13 7H25V19H1Z" fill="#ecd24c" stroke="#b89a20" /></svg></TaskButton>
            <TaskButton aria-label="Browser"><svg width="26" height="22" fill="none"><circle cx="13" cy="11" r="8" stroke="#2a80d8" strokeWidth="4" /><path d="M2 20Q6 8 24 2" stroke="#e0b030" strokeWidth="2" /></svg></TaskButton>
            <TaskButton $active aria-label="Station"><svg width="28" height="22"><path d="M14 1L20 8L27 11L20 20H8L1 11L8 8Z" fill="#3c6468" /><path d="M9 12H19M14 5V19" stroke="#9fc8c0" strokeWidth="2" /></svg></TaskButton>
            <TaskButton aria-label="Spreadsheet"><svg width="26" height="22" fill="none" stroke="#1f9a4c" strokeWidth="3"><path d="M3 20V6Q3 2 8 2H24M9 9L20 20M20 9L9 20" /></svg></TaskButton>
          </TaskGroup>
          <Tray>
            <svg width="24" height="20"><path d="M4 2H20V8H24V17H0V8H4Z" fill="#777" /></svg>
            <svg width="24" height="20"><rect x="8" y="2" width="15" height="16" fill="#d8d0a0" stroke="#666" /><circle cx="6" cy="7" r="5" fill="none" stroke="#666" strokeWidth="2" /></svg>
            <svg width="22" height="22"><path d="M1 1H21V13L11 21L1 13Z" fill="#2c5cb8" /><path d="M4 3H18V13L11 18L4 13Z" fill="#fff" /><path d="M7 5L11 13L15 5" stroke="#d02030" strokeWidth="3" fill="none" /></svg>
            <svg width="24" height="20"><path d="M2 1H12L17 6V19H2Z" fill="#fff" stroke="#666" /><path d="M11 8L22 18M22 8L11 18" stroke="#d02030" strokeWidth="3" /></svg>
            <svg width="26" height="20"><rect x="2" y="6" width="18" height="10" rx="4" fill="#aaa" /><path d="M14 12L18 16L25 5" stroke="#28a040" strokeWidth="3" fill="none" /></svg>
            <svg width="32" height="20" fill="none" stroke="#555" strokeWidth="2"><path d="M2 7H6L13 1V19L6 13H2ZM17 5Q20 10 17 15M21 2Q26 10 21 18" /></svg>
            <span>3:06 PM</span>
            <svg width="22" height="18"><rect width="22" height="18" fill="#2860c8" /></svg>
          </Tray>
        </TaskBar>
      </Frame>
    </Page>
  );
}
